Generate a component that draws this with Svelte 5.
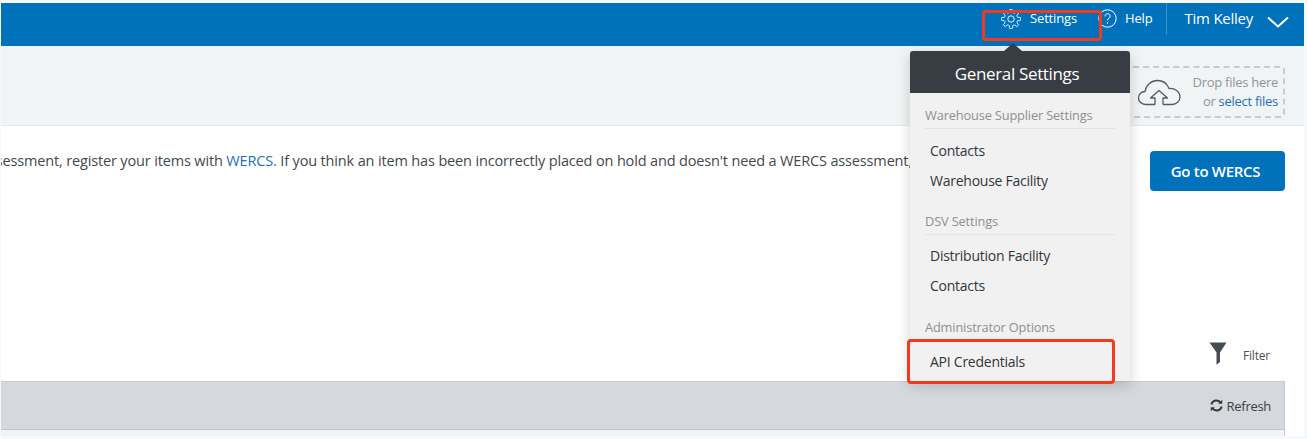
<script>
  const groups = [
    { title: 'Warehouse Supplier Settings', items: ['Contacts', 'Warehouse Facility'] },
    { title: 'DSV Settings', items: ['Distribution Facility', 'Contacts'] },
    { title: 'Administrator Options', items: ['API Credentials'] }
  ];

  // eight rounded teeth round a 20px box
  function gearPath() {
    const teeth = 8;
    const pt = (r, a) => `${(10 + r * Math.cos(a)).toFixed(2)} ${(10 + r * Math.sin(a)).toFixed(2)}`;
    let d = '';
    for (let i = 0; i < teeth; i++) {
      const step = (Math.PI * 2) / teeth;
      const a = i * step - Math.PI / 2;
      const start = a - step * 0.27;
      const end = a + step * 0.27;
      const next = a + step - step * 0.27;
      d += `${i === 0 ? 'M' : 'L'}${pt(7, start)} `;
      d += `Q${pt(10.6, start)} ${pt(9.6, a)} Q${pt(10.6, end)} ${pt(7, end)} `;
      d += `Q${pt(6.4, a + step / 2)} ${pt(7, next)} `;
    }
    return d + 'Z';
  }
</script>

<div class="page">
  <header class="topbar">
    <a class="nav-link settings">
      <svg class="gear" width="20" height="20" viewBox="0 0 20 20" fill="none" stroke="#fff" stroke-width="0.9" stroke-linejoin="round">
        <path d={gearPath()} />
        <circle cx="10" cy="10" r="3.2" />
      </svg>
      <span>Settings</span>
    </a>
    <a class="nav-link help">
      <svg width="19" height="19" viewBox="0 0 19 19" fill="none" stroke="#fff" stroke-width="1">
        <circle cx="9.5" cy="9.5" r="8.7" />
        <path d="M6.9 7.4c0-1.600 1.200-2.600 2.700-2.600s2.600 1 2.600 2.300c0 2-2.600 2-2.600 4.300" />
        <path d="M9.600 13.200v1.500" />
      </svg>
      <span>Help</span>
    </a>
    <div class="user">
      <span>Tim Kelley</span>
      <svg width="22" height="12" viewBox="0 0 22 12" fill="none" stroke="#fff" stroke-width="2">
        <path d="M1 1.500l10 9 10-9" />
      </svg>
    </div>
  </header>

  <section class="subbar">
    <div class="dropzone">
      <svg class="cloud" width="44" height="27" viewBox="0 0 44 27" fill="none" stroke="#555b63" stroke-width="1.300" stroke-linejoin="round">
        <path d="M18 25.500H8.500C4.500 25.500 1.500 22.500 1.500 19S4 12.500 8 12.500C9 6 14.500 1.500 20.500 1.500c5.500 0 9.500 3 11.500 8 5.500-.5 11 3 11 8.500 0 4-3.500 7.500-8 7.500H26" />
        <path d="M18 25.500V19h-4.500L22 11.500l8.500 7.500H26v6.500" />
      </svg>
      <div class="drop-text">
        <div>Drop files here</div>
        <div>or <a class="link">select files</a></div>
      </div>
    </div>
  </section>

  <main class="content">
    <div class="notice">
      <div class="message">
        <p>Before an item can be released it needs an assessment, register your items with <a class="link">WERCS.</a> If you think an item has been incorrectly placed on hold and doesn't need a WERCS assessment,</p>
      </div>
      <button class="primary">Go to WERCS</button>
    </div>

    <div class="filter-row">
      <svg width="18" height="23" viewBox="0 0 18 23" fill="#474c54">
        <path d="M.5 .5h17L11 10.500V20l-3.500 2.800V10.500z" />
      </svg>
      <span>Filter</span>
    </div>

    <div class="table">
      <div class="table-head">
        <svg width="13" height="13" viewBox="0 0 14 14" fill="none" stroke="#33383e" stroke-width="2.200">
          <path d="M1.500 6C2.200 3.300 4.400 1.700 7 1.700c1.800 0 3.300.8 4.300 2.100" />
          <path d="M12.500 8c-.7 2.700-2.900 4.300-5.500 4.300-1.800 0-3.300-.8-4.300-2.100" />
          <path d="M13.200 .8v4.400H8.800z" fill="#33383e" stroke="none" />
          <path d="M.8 13.200V8.800h4.400z" fill="#33383e" stroke="none" />
        </svg>
        <span>Refresh</span>
      </div>
      <div class="table-body"></div>
    </div>
  </main>

  <div class="popover">
    <div class="arrow"></div>
    <h2>General Settings</h2>
    <div class="popover-body">
      {#each groups as group}
        <div class="group-title">{group.title}</div>
        <ul>
          {#each group.items as item}
            <li>{item}</li>
          {/each}
        </ul>
      {/each}
    </div>
  </div>

  <div class="callout callout-settings"></div>
  <div class="callout callout-api"></div>
</div>

<style>
  :global(body) {
    background: #f7f8f9;
  }

  .page {
    position: relative;
    width: 1303px;
    height: 433px;
    margin: 3px 0 0 1px;
    overflow: hidden;
    background: #fff;
    font-family: 'Open Sans', 'Liberation Sans', sans-serif;
    color: #44484d;
  }

  .topbar {
    display: flex;
    align-items: flex-start;
    justify-content: flex-end;
    height: 43px;
    padding-right: 15px;
    box-sizing: border-box;
    background: #0071bb;
    color: #fff;
    font-size: 13px;
    letter-spacing: -0.15px;
  }

  .nav-link {
    display: flex;
    align-items: center;
    height: 30px;
  }

  .settings {
    gap: 9px;
    margin-right: 21px;
  }

  .gear {
    margin-top: 2px;
  }

  .help {
    gap: 8px;
    padding-right: 13px;
  }

  .user {
    display: flex;
    align-items: center;
    gap: 14px;
    height: 32px;
    padding-left: 18px;
    font-size: 15px;
    letter-spacing: -0.25px;
    border-left: 1px solid #3b92cd;
  }

  .user span {
    margin-top: -2px;
  }

  .user svg {
    margin-top: 5px;
  }

  .subbar {
    display: flex;
    justify-content: flex-end;
    align-items: flex-start;
    height: 80px;
    padding: 20px 19px 0 0;
    box-sizing: border-box;
    background: #f1f4f5;
    border-bottom: 1px solid #e6e9eb;
  }

  .dropzone {
    display: flex;
    align-items: center;
    justify-content: flex-end;
    gap: 12px;
    width: 155px;
    height: 52px;
    box-sizing: border-box;
    padding-right: 5px;
    border: 2px dashed #c8cbcf;
    border-left: none;
    border-radius: 3px;
    font-size: 13px;
    line-height: 19px;
    letter-spacing: -0.28px;
    color: #8f9499;
    text-align: right;
  }

  .cloud {
    margin-top: 1px;
  }

  .link {
    color: #1f6fb0;
  }

  .content {
    display: flex;
    flex-direction: column;
    padding-right: 19px;
  }

  .notice {
    display: flex;
    align-items: flex-start;
    gap: 16px;
    padding-top: 25px;
    height: 211px;
    box-sizing: border-box;
  }

  /* sentence runs out of the left edge and under the popover */
  .message {
    flex: 1;
    min-width: 0;
    display: flex;
    justify-content: flex-end;
    overflow: hidden;
    padding-right: 222px;
  }

  .message p {
    margin: 0;
    flex: none;
    white-space: nowrap;
    font-size: 14.500px;
    line-height: 20px;
    letter-spacing: -0.15px;
  }

  .primary {
    flex: none;
    width: 135px;
    height: 40px;
    padding: 0 4px 0 0;
    border: none;
    border-radius: 4px;
    background: #0071bb;
    color: #fff;
    font-family: inherit;
    font-size: 15px;
    font-weight: 600;
    letter-spacing: -0.3px;
  }

  .filter-row {
    display: flex;
    align-items: center;
    justify-content: flex-end;
    gap: 16px;
    height: 34px;
    padding-right: 15px;
    font-size: 12px;
    letter-spacing: -0.2px;
    color: #4a4f55;
  }

  .filter-row svg {
    margin-top: -2px;
  }

  .filter-row span {
    margin-top: 2px;
  }

  .table {
    display: flex;
    flex-direction: column;
    flex: 1;
    margin-top: 10px;
    border-right: 1px solid #c8cbcf;
  }

  .table-head {
    display: flex;
    align-items: center;
    justify-content: flex-end;
    gap: 4px;
    height: 49px;
    padding-right: 13px;
    box-sizing: border-box;
    background: #d5d8dc;
    border-top: 1px solid #c8cbcf;
    border-bottom: 1px solid #c0c3c7;
    font-size: 13px;
    letter-spacing: -0.3px;
    color: #3c4046;
  }

  .table-body {
    height: 6px;
    background: #f1f3f5;
  }

  .popover {
    position: absolute;
    left: 909px;
    top: 48px;
    width: 220px;
    height: 330px;
    background: #f1f1f1;
    border-radius: 3px;
    box-shadow: 0 4px 14px rgba(0, 0, 0, 0.18);
  }

  .arrow {
    position: absolute;
    left: 94px;
    top: -8px;
    border-left: 9px solid transparent;
    border-right: 9px solid transparent;
    border-bottom: 8px solid #383d43;
  }

  .popover h2 {
    margin: 0;
    height: 42px;
    padding-right: 6px;
    border-radius: 3px 3px 0 0;
    background: #383d43;
    color: #fff;
    font-size: 17px;
    font-weight: 400;
    line-height: 46px;
    letter-spacing: -0.35px;
    text-align: center;
  }

  .popover-body {
    padding: 12px 15px 0;
  }

  .group-title {
    height: 23px;
    border-bottom: 1px solid #e2e2e2;
    font-size: 12.800px;
    line-height: 20px;
    letter-spacing: -0.15px;
    color: #8f8f8f;
  }

  .popover ul {
    list-style: none;
    margin: 0 0 14.500px;
    padding: 7px 0 0 5px;
  }

  .popover ul:nth-of-type(2) {
    margin-bottom: 16.500px;
    padding-top: 6px;
  }

  .popover ul:nth-of-type(3) {
    padding-top: 6px;
  }

  .popover li {
    height: 30px;
    font-size: 14px;
    line-height: 30px;
    letter-spacing: -0.25px;
    color: #33363a;
  }

  .callout {
    position: absolute;
    box-sizing: border-box;
    border: 3px solid #f33a1f;
    border-radius: 4px;
  }

  .callout-settings {
    left: 981px;
    top: 7px;
    width: 120px;
    height: 31px;
  }

  .callout-api {
    left: 906px;
    top: 336px;
    width: 208px;
    height: 45px;
  }
</style>
